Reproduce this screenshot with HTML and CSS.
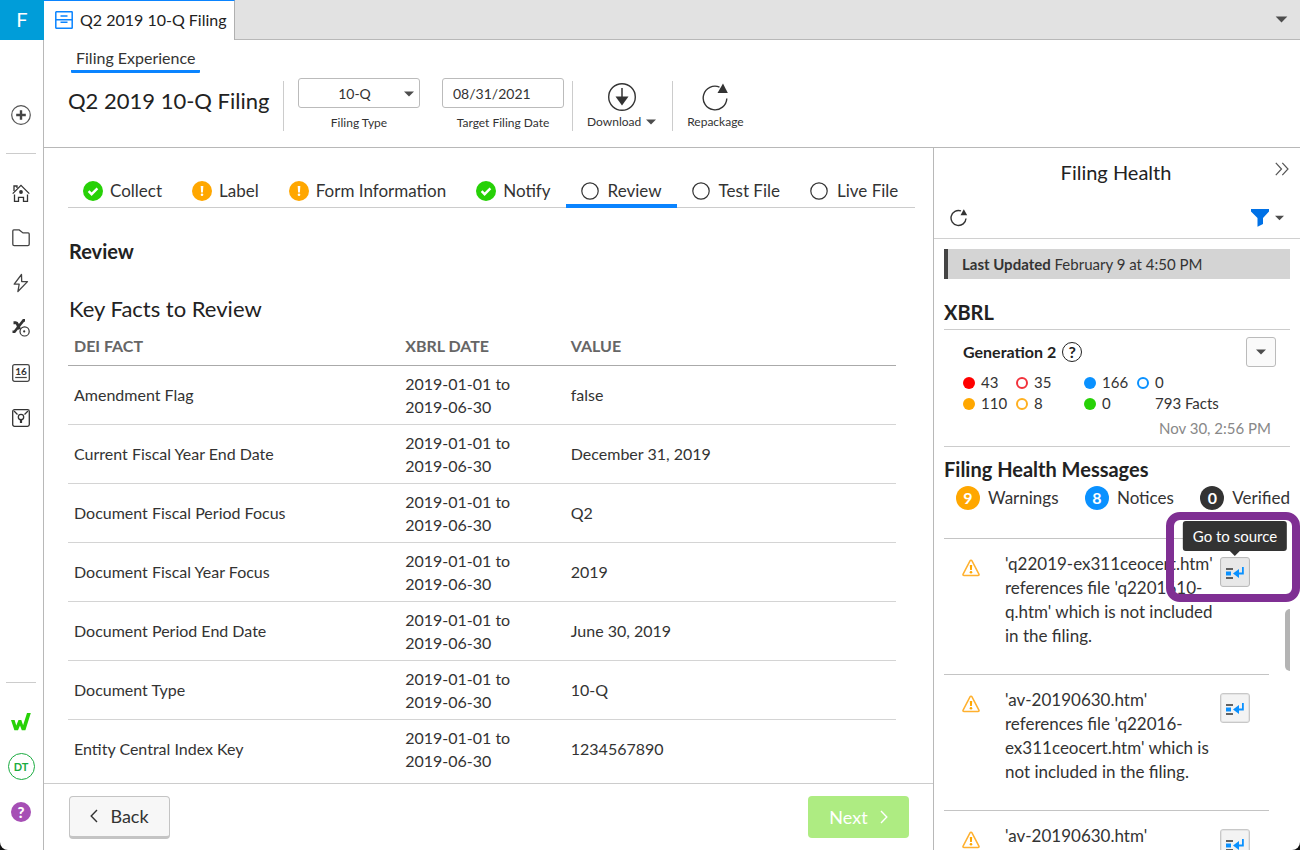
FILE: index.html
```html
<!DOCTYPE html>
<html lang="en">
<head>
<meta charset="utf-8">
<title>Q2 2019 10-Q Filing</title>
<link rel="stylesheet" href="styles.css">
</head>
<body>
<svg class="sprite" aria-hidden="true">
  <symbol id="ok" viewBox="0 0 20 20"><circle cx="10" cy="10" r="10" fill="#27d107"/><path d="M5.600 10.200l3 3 5.800-5.800" fill="none" stroke="#fff" stroke-width="2.400"/></symbol>
  <symbol id="warn" viewBox="0 0 20 20"><circle cx="10" cy="10" r="10" fill="#ffa700"/><path d="M8.700 5h2.600l-.4 6.500H9.100z" fill="#fff"/><circle cx="10" cy="13.800" r="1.300" fill="#fff"/></symbol>
  <symbol id="open" viewBox="0 0 20 20"><circle cx="9" cy="10" r="8.200" fill="none" stroke="#333" stroke-width="1.200"/></symbol>
  <symbol id="caret" viewBox="0 0 10 6"><path d="M0 .5h10L5 5.500z" fill="#4d4d4d"/></symbol>
  <symbol id="reload" viewBox="0 0 26 28"><path d="M17.500 4.100A11.800 11.800 0 1 0 24.800 15.500" fill="none" stroke="#333" stroke-width="1.400"/><path d="M15.500 10L21 .5l4.800 9.500z" fill="#333"/></symbol>
  <symbol id="reload-small" viewBox="0 0 18 18"><path d="M11 1.900A7.500 7.500 0 1 0 16 9.500" fill="none" stroke="#333" stroke-width="1.400"/><path d="M10.500 6.200L13.800.2l3.400 6z" fill="#333"/></symbol>
  <symbol id="alert" viewBox="0 0 18 18"><path d="M9 1.200c.5 0 .8.200 1 .6l6.900 13.300c.4.800 0 1.500-.9 1.500H2c-.9 0-1.300-.7-.9-1.500L8 1.800c.2-.4.500-.6 1-.6z" fill="none" stroke="#ffb02e" stroke-width="1.500"/><path d="M7.800 6h2.400l-.3 5H8.100z" fill="#ffa700"/><circle cx="9" cy="13.200" r="1.300" fill="#ffa700"/></symbol>
  <symbol id="source" viewBox="0 0 18 14"><path d="M0 3h7M0 12h7" stroke="#333" stroke-width="1.500"/><path d="M0 5.500h5v4H0z" fill="#0a91ff"/><path d="M16.900 1v6.500H12" fill="none" stroke="#0a91ff" stroke-width="1.800"/><path d="M7 7.500l6-4.500v9z" fill="#0a91ff"/></symbol>
</svg>

<div class="app">
  <nav class="rail" aria-label="Workspace">
    <a class="rail-home" href="#">F</a>
    <div class="rail-create">
      <button class="rail-item" aria-label="Create"><svg width="20" height="20" viewBox="0 0 20 20"><circle cx="10" cy="10" r="9.300" fill="none" stroke="#555" stroke-width="1.200"/><path d="M10 5.200v9.600M5.200 10h9.600" stroke="#444" stroke-width="2.400"/></svg></button>
    </div>
    <div class="rail-group">
      <button class="rail-item" aria-label="Home"><svg width="18" height="18" viewBox="0 0 18 18" fill="none" stroke="#333" stroke-width="1.300"><path d="M.7 9.600L9 1.300l8.300 8.300"/><path d="M2 7V2h3v2M2.500 10.500v6.800h4v-4h5v4h4v-6.800"/><circle cx="9" cy="8" r="1.900" fill="#333" stroke="none"/></svg></button>
      <button class="rail-item" aria-label="Files"><svg width="18" height="18" viewBox="0 0 18 18" fill="none" stroke="#444" stroke-width="1.300"><path d="M1.800.9h5.400L11 3.900h5.200q1 0 1 1v10.400q0 1.400-1.400 1.400H2.200q-1.400 0-1.400-1.400V1.900q0-1 1-1z"/></svg></button>
      <button class="rail-item" aria-label="Tasks"><svg width="18" height="20" viewBox="0 0 18 20" fill="none" stroke="#444" stroke-width="1.300" stroke-linejoin="round"><path d="M9.500 1.500L2.200 11.200h5l-1.300 7.300 9.600-9.900H9.700z"/></svg></button>
      <button class="rail-item" aria-label="XBRL"><svg width="18" height="18" viewBox="0 0 18 18" fill="none" stroke="#333"><path d="M1.500 3.800h2.200q1.300 0 2 2l1.800 4.500" stroke-width="3"/><path d="M13 1.400h-1.500L2.500 12.800H.5" stroke-width="2.600"/><circle cx="12.600" cy="12.400" r="4.600" stroke-width="1.200" fill="#fff"/><circle cx="12.200" cy="12.400" r="1.100" fill="#333" stroke="none"/></svg></button>
      <button class="rail-item" aria-label="Calendar"><svg width="18" height="18" viewBox="0 0 18 18"><rect x=".7" y=".7" width="16.600" height="16.600" rx="1.800" fill="none" stroke="#444" stroke-width="1.300"/><text class="cal-text" x="9" y="11" text-anchor="middle">16</text><path d="M3.200 13.500h11.600" stroke="#444" stroke-width="1.200"/></svg></button>
      <button class="rail-item" aria-label="Ideas"><svg width="18" height="18" viewBox="0 0 18 18" fill="none" stroke="#333" stroke-width="1.300"><rect x=".7" y=".7" width="16.600" height="16.600" rx="1.800"/><path d="M2 2l3.500 3.500M16 2l-3.500 3.500"/><circle cx="9" cy="8" r="2.700"/><path d="M9 10.800v3.200" stroke-width="2.200"/></svg></button>
    </div>
    <div class="rail-group rail-bottom">
      <button class="rail-item" aria-label="Workiva"><svg width="20" height="18" viewBox="0 0 20 18"><path d="M0 7h3.600l1.700 5.500L7.500 7h2.800l1.800 5.200L16 0h3.800l-5.400 17.300h-3.600L9 12.500l-2 4.800H3.400z" fill="#27d107"/></svg></button>
      <button class="rail-item" aria-label="Account"><span class="avatar">DT</span></button>
      <button class="rail-item" aria-label="Help"><span class="help">?</span></button>
    </div>
  </nav>

  <div class="workspace">
    <div class="tabs">
      <button class="tab"><svg width="18" height="18" viewBox="0 0 18 18" fill="none" stroke="#0a84ff" stroke-width="1.500"><rect x=".8" y=".8" width="16.400" height="16.400" rx=".5"/><path d="M1 8.700h16M5.500 5h7M5.500 11.300h7" /></svg>Q2 2019 10-Q Filing</button>
      <button class="tabs-menu" aria-label="More tabs"><svg width="13" height="7"><use href="#caret"/></svg></button>
    </div>

    <header class="header">
      <a class="mode" href="#">Filing Experience</a>
      <div class="toolbar">
        <h1 class="doc-title">Q2 2019 10-Q Filing</h1>
        <div class="tool-group fields">
          <div class="field">
            <div class="select-wrap"><select id="type" class="control type"><option>10-Q</option></select><svg class="select-caret" width="10" height="6"><use href="#caret"/></svg></div>
            <label for="type">Filing Type</label>
          </div>
          <div class="field">
            <input id="date" class="control" type="text" value="08/31/2021">
            <label for="date">Target Filing Date</label>
          </div>
        </div>
        <div class="tool-group">
          <button class="tool"><svg width="28" height="28" viewBox="0 0 28 28"><circle cx="14" cy="14" r="13.300" fill="none" stroke="#333" stroke-width="1.400"/><path d="M14 5v10" stroke="#333" stroke-width="1.500"/><path d="M7.500 13.500h13L14 22.500z" fill="#333"/></svg><span class="tool-label">Download<svg width="10" height="6"><use href="#caret"/></svg></span></button>
        </div>
        <div class="tool-group">
          <button class="tool"><svg width="26" height="28"><use href="#reload"/></svg><span class="tool-label">Repackage</span></button>
        </div>
      </div>
    </header>

    <div class="columns">
      <main class="main">
        <div class="scroll">
          <nav class="steps" aria-label="Steps">
            <button class="step"><svg width="20" height="20"><use href="#ok"/></svg>Collect</button>
            <button class="step"><svg width="20" height="20"><use href="#warn"/></svg>Label</button>
            <button class="step"><svg width="20" height="20"><use href="#warn"/></svg>Form Information</button>
            <button class="step"><svg width="20" height="20"><use href="#ok"/></svg>Notify</button>
            <button class="step current"><svg width="20" height="20"><use href="#open"/></svg>Review</button>
            <button class="step"><svg width="20" height="20"><use href="#open"/></svg>Test File</button>
            <button class="step"><svg width="20" height="20"><use href="#open"/></svg>Live File</button>
          </nav>
          <h2 class="step-title">Review</h2>
          <h3 class="facts-title">Key Facts to Review</h3>
          <table class="facts">
            <thead><tr><th class="c-fact">DEI FACT</th><th class="c-date">XBRL DATE</th><th>VALUE</th></tr></thead>
            <tbody>
              <tr><td>Amendment Flag</td><td>2019-01-01 to<br>2019-06-30</td><td>false</td></tr>
              <tr><td>Current Fiscal Year End Date</td><td>2019-01-01 to<br>2019-06-30</td><td>December 31, 2019</td></tr>
              <tr><td>Document Fiscal Period Focus</td><td>2019-01-01 to<br>2019-06-30</td><td>Q2</td></tr>
              <tr><td>Document Fiscal Year Focus</td><td>2019-01-01 to<br>2019-06-30</td><td>2019</td></tr>
              <tr><td>Document Period End Date</td><td>2019-01-01 to<br>2019-06-30</td><td>June 30, 2019</td></tr>
              <tr><td>Document Type</td><td>2019-01-01 to<br>2019-06-30</td><td>10-Q</td></tr>
              <tr><td>Entity Central Index Key</td><td>2019-01-01 to<br>2019-06-30</td><td>1234567890</td></tr>
            </tbody>
          </table>
        </div>
        <footer class="footer">
          <button class="btn"><svg width="8" height="14" viewBox="0 0 8 14"><path d="M7 1L1.200 7 7 13" fill="none" stroke="#333" stroke-width="1.400"/></svg>Back</button>
          <button class="btn next">Next<svg width="8" height="14" viewBox="0 0 8 14"><path d="M1 1l5.800 6L1 13" fill="none" stroke="#fff" stroke-width="1.400"/></svg></button>
        </footer>
      </main>

      <aside class="health">
        <div class="health-head">
          <h2 class="health-title">Filing Health</h2>
          <button class="collapse" aria-label="Collapse"><svg width="14" height="14" viewBox="0 0 14 14"><path d="M.8.800L6.500 7 .8 13.200M7.300.800L13 7l-5.700 6.200" fill="none" stroke="#555" stroke-width="1.200"/></svg></button>
        </div>
        <div class="health-tools">
          <button aria-label="Refresh"><svg width="18" height="18"><use href="#reload-small"/></svg></button>
          <button class="filter" aria-label="Filter"><svg width="18" height="18" viewBox="0 0 18 18"><path d="M0 0h18v2.500L12 9v6l-5.500 2.800V9L0 2.500z" fill="#0071e6"/></svg><svg width="9" height="6"><use href="#caret"/></svg></button>
        </div>
        <div class="health-body">
          <p class="updated"><b>Last Updated</b> February 9 at 4:50 PM</p>
          <h3 class="section-title ruled">XBRL</h3>
          <section class="generation">
            <div class="gen-head">
              <h4>Generation 2</h4>
              <span class="gen-help">?</span>
              <button class="gen-menu" aria-label="Generation options"><svg width="10" height="6"><use href="#caret"/></svg></button>
            </div>
            <div class="counts">
              <span><i class="dot red"></i>43</span><span><i class="dot red ring"></i>35</span><span><i class="dot blue"></i>166</span><span><i class="dot blue ring"></i>0</span>
              <span><i class="dot orange"></i>110</span><span><i class="dot orange ring"></i>8</span><span><i class="dot green"></i>0</span><span class="facts-count">793 Facts</span>
            </div>
            <p class="gen-date">Nov 30, 2:56 PM</p>
          </section>
          <h3 class="section-title messages-title">Filing Health Messages</h3>
          <div class="totals">
            <span><b class="badge orange">9</b>Warnings</span>
            <span><b class="badge blue">8</b>Notices</span>
            <span><b class="badge dark">0</b>Verified</span>
          </div>
          <div class="messages">
            <article class="message">
              <svg width="18" height="18"><use href="#alert"/></svg>
              <p>'q22019-ex311ceocert.htm' references file 'q2201610-q.htm' which is not included in the filing.</p>
              <div class="source-wrap">
                <button class="source hover" aria-label="Go to source"><svg width="18" height="14"><use href="#source"/></svg></button>
                <span class="tooltip" role="tooltip">Go to source</span>
                <span class="callout"></span>
              </div>
            </article>
            <article class="message">
              <svg width="18" height="18"><use href="#alert"/></svg>
              <p>'av-20190630.htm' references file 'q22016-ex311ceocert.htm' which is not included in the filing.</p>
              <div class="source-wrap"><button class="source" aria-label="Go to source"><svg width="18" height="14"><use href="#source"/></svg></button></div>
            </article>
            <article class="message">
              <svg width="18" height="18"><use href="#alert"/></svg>
              <p>'av-20190630.htm'</p>
              <div class="source-wrap"><button class="source" aria-label="Go to source"><svg width="18" height="14"><use href="#source"/></svg></button></div>
            </article>
            <span class="thumb"></span>
          </div>
        </div>
      </aside>
    </div>
  </div>
</div>
</body>
</html>
```

FILE: styles.css
```css
* { box-sizing: border-box; }
body { margin: 0; background: #111; color: #333; font: 16px/24px Lato, sans-serif; }
h1, h2, h3, h4, p { margin: 0; }
button { padding: 0; border: 0; background: none; color: inherit; font: inherit; display: flex; align-items: center; justify-content: center; }
svg { display: block; flex: none; }
.sprite { position: absolute; width: 0; height: 0; }

.app { display: flex; height: 100vh; background: #fff; border-radius: 0 0 8px 8px; overflow: hidden; }

.rail { flex: none; width: 44px; display: flex; flex-direction: column; border-right: 1px solid #b8b8b8; }
.rail-home { height: 40px; margin-right: -1px; background: #009dd9; color: #fff; font-size: 20px; line-height: 38px; text-align: center; text-decoration: none; }
.rail-create { padding: 52px 0 16px; }
.rail-item { width: 42px; height: 45px; }
.rail-group { padding-bottom: 16px; }
.rail-group::before { content: ""; display: block; width: 30px; height: 1px; margin: 0 6px 16px; background: #ccc; }
.rail-bottom { margin-top: auto; }
.cal-text { font: bold 10px Lato, sans-serif; fill: #333; }
.avatar { width: 27px; height: 27px; border: 1px solid #1aab40; border-radius: 50%; color: #1aab40; font-size: 11px; font-weight: bold; line-height: 25px; }
.help { width: 20px; height: 20px; border-radius: 50%; background: #a64fb5; color: #fff; font-size: 15px; font-weight: 900; line-height: 20px; }

.workspace { flex: 1; min-width: 0; display: flex; flex-direction: column; }
.tabs { flex: none; height: 40px; display: flex; justify-content: space-between; background: linear-gradient(#e2e2e2, #e2e2e2) 0 0 / 100% 39px no-repeat #b8b8b8; }
.tab { height: 40px; padding: 0 7px 2px 11px; gap: 7px; border-top: 1px solid #0a84ff; border-right: 1px solid #b0b0b0; background: #fff; color: #222; }
.tabs-menu { width: 38px; padding-bottom: 2px; }

.header { flex: none; height: 108px; padding: 6px 24px 0; border-bottom: 1px solid #b8b8b8; }
.mode { display: inline-block; margin-left: 3px; padding: 0 5px; border-bottom: 3px solid #0a84ff; color: #333; text-decoration: none; border-radius: 1px; }
.toolbar { display: flex; align-items: flex-start; }
.doc-title { width: 215px; padding-top: 12px; color: #222; font-size: 22px; font-weight: 400; line-height: 32px; white-space: nowrap; }
.tool-group { height: 50px; margin-top: 8px; padding-left: 14px; border-left: 1px solid #ccc; }
.fields { display: flex; gap: 22px; padding-right: 8px; }
.field { width: 122px; margin-top: -3px; text-align: center; font-size: 12px; }
.field label { display: block; margin-top: 3px; color: #333; }
.select-wrap { position: relative; }
.control { display: block; width: 100%; height: 30px; padding: 0 10px; border: 1px solid #bbb; border-radius: 3px; background: #fff; color: #333; font: 14px Lato, sans-serif; }
.type { appearance: none; padding-right: 19px; text-align-last: center; }
.select-caret { position: absolute; right: 6px; top: 13px; }
.tool { flex-direction: column; margin-top: 2px; padding-right: 16px; }
.tool-label { display: flex; align-items: center; gap: 5px; font-size: 12px; line-height: 22px; }

.columns { flex: 1; min-height: 0; display: flex; }
.main { flex: 1; min-width: 0; display: flex; flex-direction: column; }
.scroll { flex: 1; min-height: 0; overflow: hidden; padding: 24px 18px 0 24px; }
.steps { display: flex; height: 36px; border-bottom: 1px solid #ccc; font-size: 17px; }
.step { height: 36px; padding: 5px 15px 0; gap: 7px; border-bottom: 4px solid transparent; white-space: nowrap; }
.current { border-color: #0a84ff; }
.step-title { margin: 30px 0 0 1px; color: #222; font-size: 20px; line-height: 26px; }
.facts-title { margin: 29px 0 1px 1px; color: #222; font-size: 22px; font-weight: 400; line-height: 32px; }
.facts { width: calc(100% - 19px); border-collapse: collapse; table-layout: fixed; line-height: 23px; }
.facts th { height: 39px; padding: 1px 6px 0; border-bottom: 1px solid #aaa; color: #666; text-align: left; }
.facts td { padding: 6px; border-bottom: 1px solid #d4d4d4; }
.facts tr:last-child td { border-bottom: 0; }
.c-fact { width: 40%; }
.c-date { width: 20%; }
.footer { flex: none; display: flex; justify-content: space-between; padding: 12px 24px 11px 25px; border-top: 1px solid #ccc; }
.btn { width: 101px; height: 43px; padding-bottom: 1px; gap: 12px; border: 1px solid #c4c4c4; border-bottom-width: 3px; border-radius: 4px; background: #f7f7f7; font-size: 18px; }
.next { height: 42px; border: 0; background: #aeec82; color: #fff; }

.health { flex: none; width: 367px; display: flex; flex-direction: column; border-left: 1px solid #b8b8b8; }
.health-head { flex: none; display: flex; height: 50px; padding: 0 10px 0 24px; color: #222; }
.health-title { flex: 1; font-size: 20px; font-weight: 400; line-height: 48px; text-align: center; }
.collapse { width: 16px; height: 42px; }
.health-tools { flex: none; display: flex; justify-content: space-between; height: 41px; padding: 0 16px; border-bottom: 1px solid #d0d0d0; }
.filter { gap: 6px; }
.health-body { flex: 1; min-height: 0; display: flex; flex-direction: column; padding: 10px 10px 0; }
.updated { flex: none; padding-left: 14px; border-left: 4px solid #444; background: #d4d4d4; font-size: 15px; line-height: 30px; }
.section-title { flex: none; color: #222; font-size: 20px; line-height: 28px; }
.ruled { margin-top: 19px; padding-bottom: 3px; border-bottom: 1px solid #ccc; }
.generation { flex: none; padding: 7px 14px 6px 19px; border-bottom: 1px solid #ccc; }
.gen-head { display: flex; align-items: center; gap: 6px; height: 30px; color: #222; }
.gen-head h4 { font-size: 16px; }
.gen-help { width: 20px; height: 20px; border: 1px solid #222; border-radius: 50%; font-weight: bold; line-height: 18px; text-align: center; }
.gen-menu { width: 30px; height: 30px; margin-left: auto; border: 1px solid #bbb; border-radius: 3px; background: #fafafa; }
.counts { display: grid; grid-template-columns: 53px 68px 53px auto; margin-top: 5px; font-size: 15px; line-height: 21px; }
.counts span { display: flex; align-items: center; gap: 6px; }
.counts .facts-count { padding-left: 18px; }
.dot { width: 12px; height: 12px; border-radius: 50%; }
.red { background: #f00; color: #f2323c; }
.blue { background: #0a91ff; color: #0a91ff; }
.orange { background: #ffa700; color: #ffb020; }
.green { background: #27d107; }
.dark { background: #333; }
.ring { border: 2px solid currentColor; background: #fff; }
.gen-date { padding-right: 5px; color: #888; font-size: 15px; text-align: right; margin-top: 2px; }
.messages-title { margin-top: 8px; }
.totals { flex: none; display: flex; justify-content: space-between; padding-left: 12px; margin-top: 3px; font-size: 17px; }
.totals span { display: flex; align-items: center; gap: 8px; }
.totals .badge { width: 24px; height: 24px; border-radius: 50%; color: #fff; font-size: 16px; line-height: 24px; text-align: center; }
.messages { position: relative; flex: 1; margin-top: 28px; padding-right: 21px; min-height: 0; }
.message { display: flex; height: 136px; padding: 12px 19px 0 18px; border-top: 1px solid #c4c4c4; font-size: 17px; }
.message > svg { margin-top: 8px; }
.message p { flex: 1; margin: 0 4px 0 25px; padding-top: 1px; }
.source-wrap { position: relative; height: 30px; margin-top: 6px; }
.source { width: 30px; height: 30px; padding-top: 2px; border: 1px solid #c8c8c8; border-radius: 3px; background: #f3f3f3; box-shadow: inset 0 0 0 1px #e4e4e4; }
.hover { border-color: #bbb; background: #e8e8e8; }
.tooltip { position: absolute; left: 50%; bottom: 36px; padding: 0 10px; border-radius: 3px; background: #333; color: #fff; font-size: 15px; line-height: 30px; white-space: nowrap; transform: translateX(-50%); z-index: 2; }
.tooltip::after { content: ""; position: absolute; left: 50%; top: 100%; margin-left: -5px; border: 5px solid transparent; border-top-color: #333; border-bottom: 0; }
.callout { position: absolute; left: -54px; top: -45px; width: 134px; height: 90px; border: 8px solid #7f2f93; border-radius: 14px; }
.thumb { position: absolute; right: 0; top: 71px; width: 5px; height: 62px; border-radius: 5px 0 0 5px; background: #b4b4b4; }
```
